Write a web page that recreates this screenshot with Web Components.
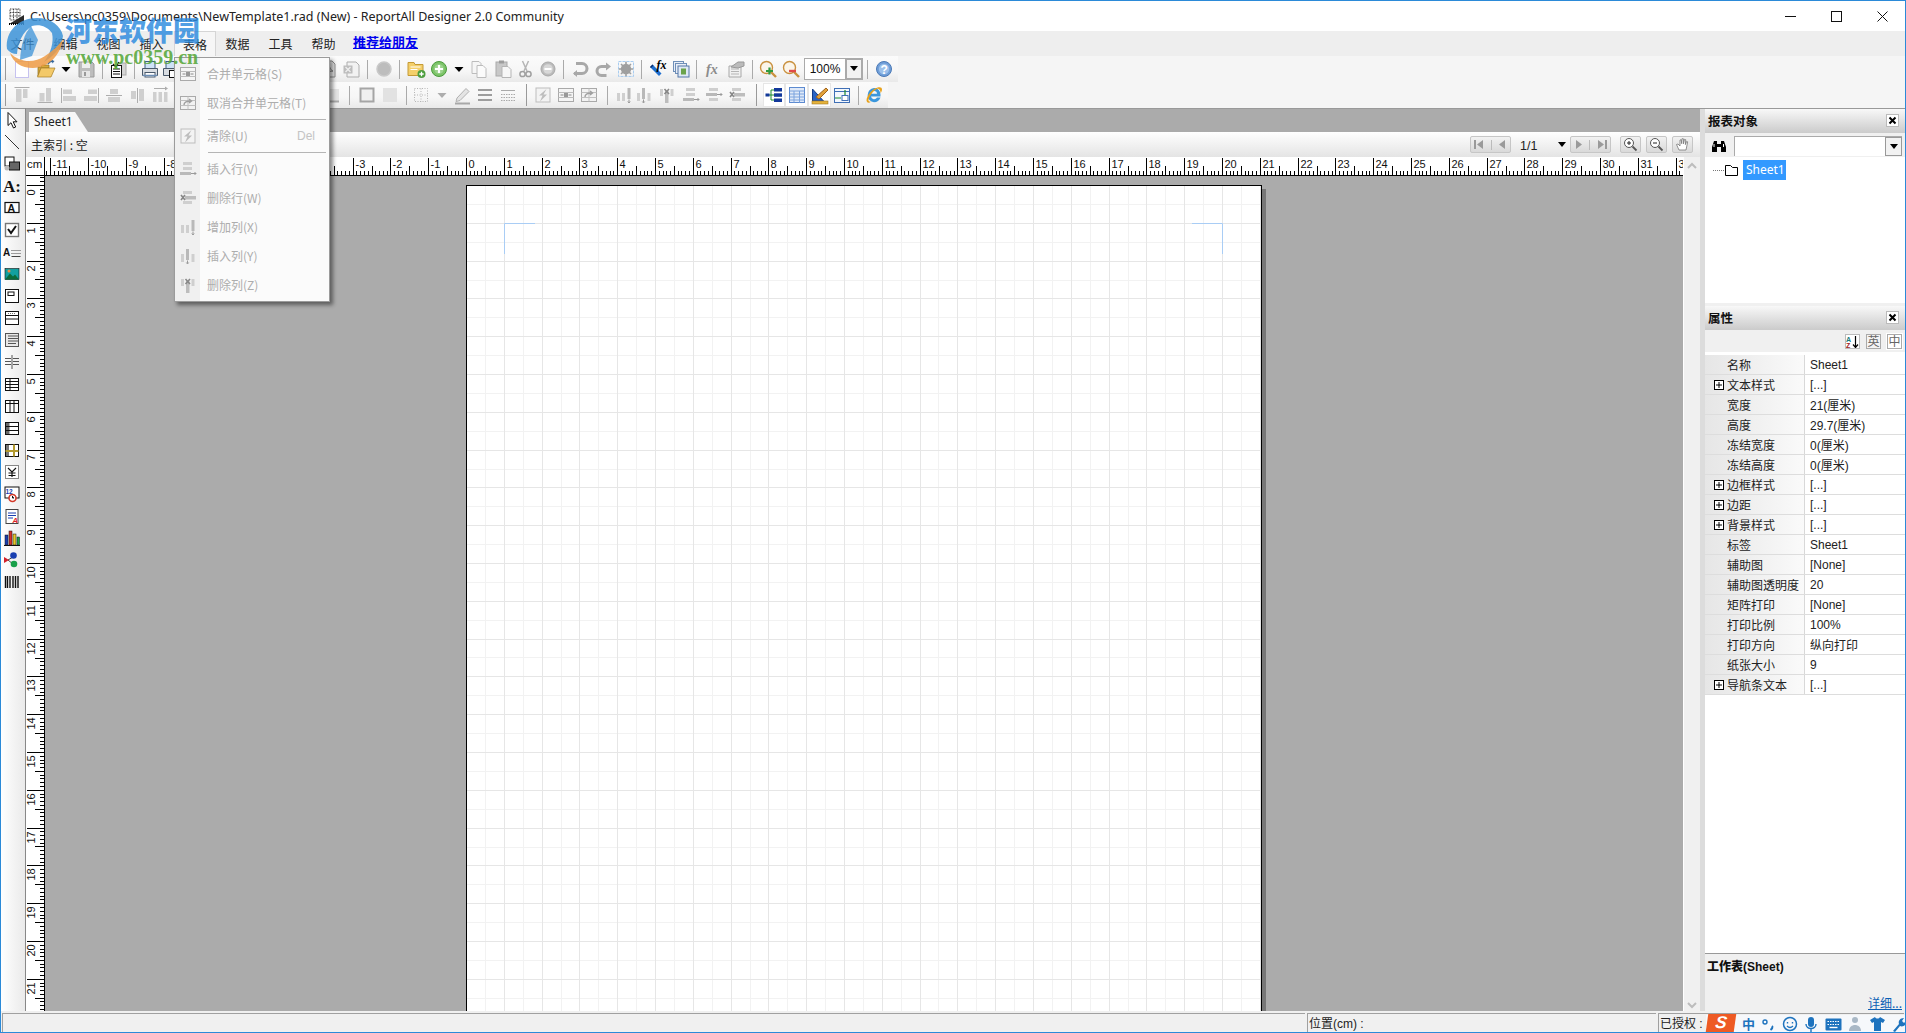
<!DOCTYPE html>
<html lang="zh"><head><meta charset="utf-8"><title>ReportAll Designer</title>
<style>
html,body{margin:0;padding:0;background:#f0f0f0;overflow:hidden}
body{font:12px "Liberation Sans","Noto Sans CJK SC",sans-serif;color:#111}
</style></head><body>
<ra-app>
  <ra-titlebar slot="title">C:\Users\pc0359\Documents\NewTemplate1.rad (New) - ReportAll Designer 2.0 Community</ra-titlebar>
  <ra-menubar slot="menu"></ra-menubar>
  <ra-toolbar slot="tb1" items="grip:9 new:24 open:23.5 drop:17.5 save:22 sep:10 preview:22 sep:10 print:22 pprint:20 gap:136 pdf:23 excel:23 sep:9 circle:23 sep:9 folder:23 plus:24 drop:15 copy:25 paste:23 cut:23 minus:22 sep:9 undo:23 redo:23 gear:23 sep:9 fxedit:23 layers:23 sep:9 fx:23 hand:23 sep:10 zin:22 zout:23 gap:1.5 combo:59 sep:10 help:22 gap:3"></ra-toolbar>
  <ra-toolbar slot="tb2" items="grip:9 atop:23 abot:23 aleft:23 aright:23 acv:23 ach:23 dist:23 gap:149.5 rectb:23 sep:12 box:23 boxf:23 sep:9 dots:21 dropg:20 pen:21 lines:24 dash:23 grip:14 bolt:19.5 merge:25 unmerge:22 sep:14 addcol:19 inscol:22 delcol:24 insrow:24 delrow:22 xrow:24 grip:14 tree!:22 table!:23 tool!:23 layout:22 sep:10 ie:22 gap:3"></ra-toolbar>
  <ra-rail slot="rail"></ra-rail>
  <ra-center slot="center"></ra-center>
  <ra-dock slot="dock"></ra-dock>
  <ra-status slot="status"></ra-status>
  <ra-dropdown slot="over"></ra-dropdown>
  <ra-watermark slot="over"></ra-watermark>
  <ra-ime slot="over"></ra-ime>
</ra-app>
<script>
const g1='#cfcfcf',g2='#adadad',g3='#8e8e8e';
const T=(x,y,s,t,extra='')=>`<text x="${x}" y="${y}" font-size="${s}" ${extra}>${t}</text>`;
const ICONS={
 new:`<rect x="3.5" y="2.5" width="13" height="16" fill="#fff" stroke="#c6c2ef"/>`,
 open:`<path d="M2 8h3l1-2h7v3H5L2 17z" fill="#d8a93a" stroke="#8a6a1e" stroke-width=".7"/><path d="M5 9h14l-4 9H1.500z" fill="#f3c969" stroke="#a67c23" stroke-width=".7"/><path d="M12 5c1-2 3-3 5-3" fill="none" stroke="#35689c" stroke-width="1.300"/><path d="M15.500 1l3 1-2 2.500z" fill="#35689c"/>`,
 drop:`<path d="M5.500 8h9l-4.500 5z" fill="#000"/>`,
 dropg:`<path d="M5.500 8h9l-4.500 5z" fill="${g2}"/>`,
 save:`<path d="M3 3h13l2 2v13H3z" fill="#bdbdbd" stroke="#9a9a9a"/><rect x="6" y="3.500" width="8" height="5.500" fill="#eee"/><rect x="6" y="12" width="8" height="6" fill="#e6e6e6"/><rect x="8" y="13" width="2" height="4" fill="#999"/>`,
 preview:`<rect x="9" y="4" width="9" height="12" fill="#d4d4d4" stroke="#aaa"/><rect x="3.500" y="6.500" width="10" height="12" fill="#fff" stroke="#111"/><path d="M5 10h7M5 12.500h7M5 15h7" stroke="#111"/><path d="M5 5l3 3 3-5" fill="none" stroke="#111" stroke-width="1.200"/>`,
 print:`<rect x="5" y="2.500" width="10" height="8" fill="#cfe3f7" stroke="#3e5f86"/><path d="M2.500 9.500h15v7h-15z" fill="#d9dde2" stroke="#4a5a6c"/><rect x="5" y="13.500" width="10" height="4.500" fill="#fff" stroke="#4a5a6c"/><path d="M3 16.500h14" stroke="#6d8fb5" stroke-width="1.500"/>`,
 pprint:`<rect x="5" y="2.500" width="10" height="8" fill="#cfe3f7" stroke="#3e5f86"/><path d="M2.500 9.500h15v7h-15z" fill="#d9dde2" stroke="#4a5a6c"/><rect x="8.500" y="11.500" width="9" height="7" fill="#fff" stroke="#111"/>`,
 pdf:`<path d="M4 2h9l3 3v13H4z" fill="#e9e9e9" stroke="${g3}"/><path d="M6 14c3-2 4-6 4-8 1 4 3 6 4 6-3 0-5 1-8 2z" fill="none" stroke="#777"/>`,
 excel:`<path d="M5 3h9l3 3v12H5z" fill="#f2f2f2" stroke="${g2}"/><path d="M1.500 6.500h9v8h-9z" fill="#bdbdbd"/><path d="M3.500 8l5 5M8.500 8l-5 5" stroke="#eee" stroke-width="1.300"/>`,
 circle:`<circle cx="10" cy="10" r="7" fill="#bdbdbd" stroke="#c9c9c9" stroke-width="1.500"/>`,
 folder:`<path d="M2 3.500h6l1 2h8v11H2z" fill="#f4cf6a" stroke="#c49a36"/><path d="M4.500 8h10M4.500 10.500h7" stroke="#fff"/><circle cx="15.500" cy="15" r="4" fill="#4d9e3f"/><path d="M15.500 12.800v4.400M13.300 15h4.400" stroke="#fff" stroke-width="1.300"/>`,
 plus:`<circle cx="10" cy="10" r="7.500" fill="#7cc468" stroke="#4b9b3c"/><circle cx="10" cy="10" r="4.800" fill="#fff" fill-opacity=".25"/><path d="M10 6v8M6 10h8" stroke="#fff" stroke-width="2.200"/>`,
 copy:`<path d="M3 2.500h7l2 2v10H3z" fill="#f6f6f6" stroke="#bcbcbc"/><path d="M8 6.500h6l3 3v9H8z" fill="#fbfbfb" stroke="#bcbcbc"/>`,
 paste:`<rect x="3" y="3" width="11" height="14" fill="#c8c8c8" stroke="#aaa"/><rect x="6" y="1.500" width="5" height="3" fill="#9d9d9d"/><path d="M9 7.500h6l3 3v8H9z" fill="#f7f7f7" stroke="#b5b5b5"/>`,
 cut:`<path d="M12.500 2L8 12M6.500 2L11 12" stroke="#b5b5b5" stroke-width="1.500"/><circle cx="6.500" cy="15" r="2.600" fill="none" stroke="#9f9f9f" stroke-width="1.500"/><circle cx="12.500" cy="15" r="2.600" fill="none" stroke="#9f9f9f" stroke-width="1.500"/>`,
 minus:`<circle cx="10" cy="10" r="7" fill="#bcbcbc" stroke="#a8a8a8"/><circle cx="10" cy="10" r="4.800" fill="#d8d8d8"/><path d="M6.500 10h7" stroke="#fff" stroke-width="2"/>`,
 undo:`<path d="M6 4.500h6a4.500 4.500 0 0 1 0 10H4" fill="none" stroke="#a8a8a8" stroke-width="3"/><path d="M7 11l-4 3.500 4 3.500z" fill="#a8a8a8"/>`,
 redo:`<path d="M14 7.500H8.500a4 4 0 0 0 0 9h5" fill="none" stroke="#a8a8a8" stroke-width="3"/><path d="M13 3.500l5 4-5 4z" fill="#a8a8a8"/>`,
 gear:`<rect x="2.500" y="2.500" width="15" height="15" fill="none" stroke="#a9cdf0" stroke-dasharray="3 1"/><circle cx="10" cy="10" r="5.200" fill="#9f9f9f"/><circle cx="10" cy="10" r="2" fill="#eee"/><path d="M10 2.800v14.400M2.800 10h14.400M5 5l10 10M15 5L5 15" stroke="#9f9f9f" stroke-width="1.600"/>`,
 fxedit:`<path d="M2 8l9 9 2.500-2.500-9-9z" fill="#1f6fd0"/><path d="M2 8l2.500-2.500 1 1L3 9z" fill="#0d2f6b"/>`+T(8.500,10,12,'fx','font-family="Liberation Serif" font-style="italic" font-weight="bold" fill="#000"'),
 layers:`<rect x="2.500" y="2.500" width="10" height="10" fill="#e8eef7" stroke="#6f8fb8"/><rect x="4.500" y="4.500" width="11" height="10" fill="#e8eef7" stroke="#6f8fb8"/><rect x="7" y="7" width="11" height="11" fill="#dfe9f5" stroke="#5577a8"/><rect x="10" y="9.500" width="5" height="6" fill="#6ba34b"/>`,
 fx:T(3,15,14,'fx','font-family="Liberation Serif" font-style="italic" font-weight="bold" fill="#8c8c8c"'),
 hand:`<path d="M3 7h12v11H3z" fill="#f1f1f1" stroke="#a8a8a8"/><path d="M5 10h8M5 12.500h8M5 15h8" stroke="#b5b5b5"/><path d="M5 8l7-5h6v4l-6 2z" fill="#bbb" stroke="#999"/>`,
 zin:`<circle cx="8.500" cy="8.500" r="6" fill="#fbf5ea" stroke="#c9913f" stroke-width="1.400"/><path d="M13 13l5 5" stroke="#c9913f" stroke-width="2.400"/><path d="M11.500 8.500v7M8 12h7" stroke="#2f9a3f" stroke-width="2.200"/>`,
 zout:`<circle cx="8.500" cy="8.500" r="6" fill="#fbf5ea" stroke="#c9913f" stroke-width="1.400"/><path d="M13 13l5 5" stroke="#c9913f" stroke-width="2.400"/><path d="M8 12h7" stroke="#e04a4a" stroke-width="2.400"/>`,
 help:`<circle cx="10" cy="10" r="7.500" fill="#6f9ed8" stroke="#4b79b6"/><circle cx="10" cy="10" r="5.200" fill="#9cc0ea"/>`+T(6.500,14.500,12,'?','font-family="Liberation Sans" font-weight="bold" fill="#fff"'),
 atop:`<path d="M2.500 2.500h15" stroke="${g2}"/><rect x="4" y="4" width="5.500" height="13" fill="${g1}"/><rect x="11" y="4" width="4.500" height="9" fill="${g1}"/>`,
 abot:`<path d="M2.500 17.500h15" stroke="${g2}"/><rect x="4.500" y="8" width="5" height="8.500" fill="${g1}"/><rect x="11" y="3" width="5" height="13.500" fill="${g1}"/>`,
 aleft:`<path d="M3.500 3v15" stroke="${g2}"/><rect x="5" y="4.500" width="9" height="4.500" fill="${g1}"/><rect x="5" y="11" width="13" height="5" fill="${g1}"/>`,
 aright:`<path d="M17.500 3v15" stroke="${g2}"/><rect x="7" y="4.500" width="9" height="4.500" fill="${g1}"/><rect x="3" y="11" width="13" height="5" fill="${g1}"/>`,
 acv:`<path d="M2 10.500h16" stroke="${g2}"/><rect x="6" y="4" width="8" height="5" fill="${g1}"/><rect x="4" y="12" width="12" height="5" fill="${g1}"/>`,
 ach:`<path d="M10.500 3v15" stroke="${g2}"/><rect x="4" y="6" width="5" height="8" fill="${g1}"/><rect x="12" y="4" width="5" height="12" fill="${g1}"/>`,
 dist:`<path d="M4 3.500h11" stroke="${g2}"/><path d="M15 1.500l3 2-3 2z" fill="${g2}"/><rect x="3" y="7" width="3.500" height="10" fill="${g1}"/><rect x="8.500" y="7" width="3.500" height="10" fill="${g1}"/><rect x="14" y="7" width="3.500" height="10" fill="${g1}"/>`,
 rectb:`<rect x="3" y="4" width="14" height="12" fill="#e3e3e3"/><path d="M3 16.500h14" stroke="#aaa" stroke-width="2"/>`,
 box:`<rect x="3.500" y="3.500" width="13" height="13" fill="#f0f0f0" stroke="#a5a5a5" stroke-width="2"/>`,
 boxf:`<rect x="3" y="3" width="14" height="14" fill="#e2e2e2"/>`,
 dots:`<path d="M3.500 3.500h13v13h-13zM3.500 10h13M10 3.500v13" fill="none" stroke="#b5b5b5" stroke-dasharray="1 1.500"/>`,
 pen:`<path d="M5 13L14 3.500l3 3L8 15.500l-4 1z" fill="#e4e4e4" stroke="#b0b0b0"/><path d="M3 18.500h15" stroke="#a8a8a8" stroke-width="2"/>`,
 lines:`<path d="M3 5h14M3 10h14M3 15h14" stroke="#9d9d9d" stroke-width="2"/>`,
 dash:`<path d="M3 5.500h14" stroke="#aaa"/><path d="M3 9.500h14M3 12.500h14M3 15.500h14" stroke="#aaa" stroke-dasharray="1.500 1"/>`,
 bolt:`<rect x="3" y="3" width="14" height="14" fill="#f3f3f3" stroke="#bdbdbd"/><path d="M13.500 4L6 10.500h3.500L7 16.500l7-7h-3.500z" fill="#bdbdbd"/>`,
 merge:`<rect x="2.500" y="3.500" width="15" height="13" fill="#f5f5f5" stroke="#a9a9a9"/><path d="M2.500 7.500h15M2.500 12.500h15" stroke="#bcbcbc"/><path d="M4.500 10h3M12.500 10h3" stroke="#888"/><rect x="8" y="8" width="4" height="4" fill="#999"/>`,
 unmerge:`<rect x="2.500" y="3.500" width="15" height="13" fill="#f2f2f2" stroke="#a9a9a9"/><path d="M2.500 7.500h15M2.500 12.500h15M10 3.500v13" stroke="#c0c0c0"/><path d="M6 12c0-3 3-4 7-4M11 6l2.500 2-2.500 2" fill="none" stroke="#9f9f9f" stroke-width="1.400"/>`,
 addcol:`<rect x="3" y="8" width="3" height="8" fill="${g1}"/><rect x="8" y="8" width="3" height="8" fill="${g1}"/><rect x="13.500" y="3" width="3" height="11" fill="#b9b9b9"/><path d="M15 14.500v3M13.800 16.500l1.200 1.500 1.200-1.500" stroke="#999" fill="none"/>`,
 inscol:`<rect x="3" y="8" width="3" height="8" fill="${g1}"/><rect x="8" y="3" width="3" height="11" fill="#b9b9b9"/><rect x="13.500" y="8" width="3" height="8" fill="${g1}"/><path d="M9.500 14.500v3M8.300 16.500l1.200 1.500 1.200-1.500" stroke="#999" fill="none"/>`,
 delcol:`<rect x="3" y="4" width="3" height="7" fill="${g1}"/><rect x="8" y="6" width="3.500" height="12" fill="#bdbdbd"/><rect x="13.500" y="4" width="3" height="7" fill="${g1}"/><path d="M7.500 4l4.500 5M12 4L7.500 9" stroke="#888" stroke-width="1.600"/>`,
 insrow:`<rect x="5" y="3" width="9" height="3" fill="${g1}"/><rect x="5" y="8" width="9" height="3" fill="${g1}"/><rect x="2" y="13" width="11" height="3" fill="#b9b9b9"/><path d="M13 14.500h5M16.500 13l1.500 1.500-1.500 1.500" stroke="#999" fill="none"/>`,
 delrow:`<rect x="5" y="3" width="9" height="3" fill="${g1}"/><rect x="2" y="8" width="11" height="3" fill="#b9b9b9"/><rect x="5" y="13" width="9" height="3" fill="${g1}"/><path d="M13 9.500h5M16.500 8l1.500 1.500-1.500 1.500" stroke="#999" fill="none"/>`,
 xrow:`<rect x="5" y="3" width="9" height="3" fill="${g1}"/><rect x="7" y="8" width="11" height="3.500" fill="#bdbdbd"/><rect x="5" y="13" width="9" height="3" fill="${g1}"/><path d="M3 7l4 5M7 7l-4 5" stroke="#888" stroke-width="1.600"/>`,
 tree:`<path d="M4 10h3M7 5v10M7 5h3M7 15h3M7 10h3" stroke="#1a8a2e" fill="none"/><rect x="1.500" y="8.500" width="4" height="3" fill="#12389a"/><rect x="10" y="3" width="8" height="3.500" fill="#12389a"/><rect x="10" y="8.300" width="8" height="3.500" fill="#12389a"/><rect x="10" y="13.500" width="8" height="3.500" fill="#12389a"/>`,
 table:`<rect x="2.500" y="2.500" width="15" height="15" fill="#dfe9f8" stroke="#5c8ad0"/><path d="M2.500 6h15M2.500 9h15M2.500 12h15M2.500 15h15M7 6v11.500M12.500 6v11.500" stroke="#7da4de"/>`,
 tool:`<path d="M2.500 16V4l11 12z" fill="#2a63c4" stroke="#123c8a"/><path d="M6 12l10-9 2 2-9 9z" fill="#e2a23b" stroke="#a0641c"/><rect x="2" y="16" width="16" height="3" fill="#e6b33c" stroke="#a0781e" stroke-width=".6"/>`,
 layout:`<rect x="2.500" y="3.500" width="15" height="14" fill="#f3f7fd" stroke="#3f6fb5"/><path d="M2.500 6.500h15" stroke="#3f6fb5"/><rect x="10" y="10.500" width="6" height="5" fill="#fff" stroke="#3f6fb5"/><path d="M3 13h6M13 10V5" stroke="#1a8a2e" stroke-width="1.200"/>`,
 ie:`<path d="M16.500 11.500H7a3.200 3.200 0 0 0 6 1h3.500c-1 3-3.500 4.800-6.500 4.800A7.200 7.200 0 0 1 10 3c4 0 7 3 6.500 8.500zM7.200 8.800h5.800a2.900 2.900 0 0 0-5.800 0z" fill="#3b97dc"/><path d="M3 17C1 14 6 5 13 2.800c3-1 5-.5 5 1.700 0 1-.5 2.400-1.500 3.500 0-2-.5-4-2.800-4.500C8 6 4.500 13 4.500 15.500c0 1 1 1.500 2.800 1-1.800 1.500-3.300 1.500-4.300.5z" fill="#e8a21c"/>`,
 r_arrow:`<path d="M6 2.500v13l3-2.800 2.500 5.300 2.200-1-2.500-5.200H15z" fill="#fff" stroke="#111"/>`,
 r_line:`<path d="M3 3l14 14" stroke="#333"/>`,
 r_shape:`<rect x="3" y="3" width="9" height="9" fill="#fff" stroke="#111"/><rect x="7.500" y="8" width="10" height="8" fill="#666" stroke="#111"/><circle cx="5" cy="14" r="2.500" fill="#bbb"/>`,
 r_a:T(1,16,17,'A:','font-family="Liberation Serif" font-weight="bold" fill="#111"'),
 r_tbox:`<rect x="3" y="4.500" width="14" height="10" fill="#fff" stroke="#111" stroke-width="1.200"/>`+T(5.500,13.500,10.500,'A','font-family="Liberation Sans" font-weight="bold" fill="#111"'),
 r_check:`<rect x="3.500" y="3.500" width="13" height="13" fill="#fff" stroke="#777" stroke-width="1.400"/><path d="M6 9l3 4 5-7" fill="none" stroke="#111" stroke-width="2"/>`,
 r_dots:T(1,14,10,'A','font-family="Liberation Sans" font-weight="bold" fill="#111"')+`<path d="M9.500 8.500h9M9.500 11.500h9" stroke="#444" stroke-dasharray="1 1"/><path d="M9.500 14.500h9" stroke="#444"/>`,
 r_img:`<rect x="3" y="4.500" width="14" height="11" fill="#12a0a0" stroke="#111" stroke-width=".6"/><path d="M3 15.500l5-6 3 3 2-2 4 5z" fill="#0b6b3a"/><circle cx="7" cy="7" r="1.500" fill="#e84"/>`,
 r_frame:`<rect x="3.500" y="3.500" width="13" height="13" fill="#fff" stroke="#111"/><rect x="6" y="6" width="6" height="3.500" fill="#fff" stroke="#111"/>`,
 r_head:`<rect x="3.500" y="3.500" width="13" height="13" fill="#fff" stroke="#111"/><path d="M3.500 7.500h13M3.500 11h13" stroke="#111"/><path d="M6 5.500h8" stroke="#777" stroke-dasharray="1 1"/>`,
 r_list:`<rect x="3.500" y="3.500" width="13" height="13" fill="#e8e8e8" stroke="#555"/><path d="M6 6h10.500M6 8.500h10.500M6 11h10.500M6 13.500h8" stroke="#555"/>`,
 r_split:`<path d="M3 6.500h6M11 6.500h6M3 9.500h6M11 9.500h6M3 12.500h6M11 12.500h6M10 3v14" stroke="#555"/>`,
 r_grid:`<rect x="3.500" y="4.500" width="13" height="12" fill="#fff" stroke="#111"/><path d="M3.500 7.500h13M3.500 10.500h13M3.500 13.500h13M8 4.500v12" stroke="#111"/>`,
 r_cols:`<rect x="3.500" y="4.500" width="13" height="12" fill="#fff" stroke="#111"/><path d="M3.500 7.500h13M8 4.500v12M12 4.500v12" stroke="#111"/>`,
 r_rows:`<rect x="3.500" y="4.500" width="13" height="12" fill="#fff" stroke="#111"/><rect x="4" y="5" width="3.500" height="11" fill="#666"/><path d="M3.500 8.500h13M3.500 12.500h13" stroke="#111"/>`,
 r_cross:`<rect x="3.500" y="4.500" width="13" height="12" fill="#fff" stroke="#111"/><rect x="4" y="5" width="3" height="11" fill="#777"/><path d="M3.500 11h13M12 4.500v12" stroke="#b39a2f" stroke-width="2"/>`,
 r_yen:`<rect x="3.500" y="3.500" width="13" height="13" fill="#fff" stroke="#888"/><path d="M6 6l4 4 4-4M10 10v5M6.500 11h7M6.500 13.500h7" fill="none" stroke="#111" stroke-width="1.200"/>`,
 r_num:`<rect x="3" y="3" width="14" height="11" fill="#fff" stroke="#111"/>`+T(3.500,9.500,6.500,'12','font-family="Liberation Sans" font-weight="bold" fill="#1a3fb0"')+`<circle cx="10.500" cy="14" r="3.500" fill="#fff" stroke="#d23a2a" stroke-width="1.600"/><path d="M10.500 12v2h1.500" stroke="#111"/>`,
 r_note:`<rect x="4" y="3.500" width="12" height="14" fill="#fff" stroke="#444"/><path d="M4 3.500h12" stroke="#444" stroke-dasharray="1 1"/><path d="M6 7h8M6 9.500h8M6 12h5" stroke="#1a3fb0"/>`+T(10.500,17,7.500,'A','font-family="Liberation Sans" font-weight="bold" font-style="italic" fill="#d22"'),
 r_chart:`<path d="M2 17.500h16" stroke="#111"/><rect x="3" y="7" width="3" height="10" fill="#1a3fb0" stroke="#111" stroke-width=".5"/><rect x="7" y="3" width="3" height="14" fill="#d2302a" stroke="#111" stroke-width=".5"/><rect x="11" y="6" width="3" height="11" fill="#e6c82a" stroke="#111" stroke-width=".5"/><rect x="15" y="9" width="2.500" height="8" fill="#19a04a" stroke="#111" stroke-width=".5"/>`,
 r_pie:`<path d="M6 10l5-3M6 10l5 4" stroke="#444"/><circle cx="11.500" cy="5.500" r="3.300" fill="#1a3fb0"/><path d="M2 7l5 3-5 3z" fill="#d2202a"/><circle cx="12" cy="14" r="3.300" fill="#19a04a"/>`,
 r_bar:`<path d="M3.500 4v12M5.500 4v12M8 4v12M11 4v12M13.500 4v12M16 4v12" stroke="#111" stroke-width="1.400"/>`
};
class Base extends HTMLElement{
  constructor(){super();this.attachShadow({mode:'open'});}
  connectedCallback(){this.shadowRoot.innerHTML=`<style>${this.css()}</style>${this.html()}`;}
  css(){return ':host{display:block}';} html(){return '<slot></slot>';}
}
const def=(n,c)=>customElements.define(n,c);
const CJK='"Noto Sans CJK SC","Liberation Sans",sans-serif';
const MIX='"Liberation Sans","Noto Sans CJK SC",sans-serif';

def('ra-icon',class extends Base{
  css(){return `:host{display:inline-flex;width:20px;height:20px;flex:none}svg{overflow:visible;display:block}`;}
  html(){return `<svg width="20" height="20" viewBox="0 0 20 20">${ICONS[this.getAttribute('name')]||''}</svg>`;}
});

def('ra-app',class extends Base{
  css(){return `:host{display:grid;box-sizing:border-box;width:1906px;height:1033px;border:1px solid #2b8ad8;position:relative;overflow:hidden;background:#f0f0f0;
    grid-template-columns:25px 1fr 5px 200px;grid-template-rows:30px 25px 26px 26px 1fr 21px;}
    .row{grid-column:1/-1;min-width:0}
    .rail{grid-column:1;min-height:0}.center{grid-column:2;min-width:0;min-height:0}.gap{grid-column:3;background:#dcdcdc;border-top:1px solid #999}.dock{grid-column:4;min-height:0}`;}
  html(){return `<div class="row"><slot name="title"></slot></div><div class="row" style="background:#eee"><slot name="menu"></slot></div>
   <div class="row" style="background:#f5f5f5"><slot name="tb1"></slot></div><div class="row" style="background:#f5f5f5"><slot name="tb2"></slot></div>
   <div class="rail"><slot name="rail"></slot></div><div class="center"><slot name="center"></slot></div><div class="gap"></div><div class="dock"><slot name="dock"></slot></div>
   <div class="row"><slot name="status"></slot></div><slot name="over"></slot>`;}
});

def('ra-titlebar',class extends Base{
  css(){return `:host{display:flex;align-items:center;height:30px;background:#fff;font:12.500px "Noto Sans","Noto Sans CJK SC",sans-serif;color:#222}
   .ic{margin:0 4px 0 7px;width:18px;height:18px}.t{flex:1;white-space:nowrap}
   .w{display:flex}.b{width:46px;height:30px;display:flex;align-items:center;justify-content:center}`;}
  html(){return `<svg class="ic" viewBox="0 0 18 18"><path d="M2 2h10v11H2zM2 5.500h10M2 9h10M5.500 2v11M9 2v11" fill="#fff" stroke="#444" stroke-dasharray="1 .6"/><path d="M1 17h15L16 8z" fill="#2a2a2a"/><path d="M1 17h15" stroke="#000" stroke-width="2" stroke-dasharray="1 1"/></svg>
   <div class="t"><slot></slot></div><div class="w">
   <div class="b"><svg width="11" height="11"><path d="M0 5.500h11" stroke="#111"/></svg></div>
   <div class="b"><svg width="11" height="11"><rect x=".5" y=".5" width="10" height="10" fill="none" stroke="#111"/></svg></div>
   <div class="b"><svg width="11" height="11"><path d="M.5.500l10 10M10.500.500l-10 10" stroke="#111"/></svg></div></div>`;}
});

def('ra-menubar',class extends Base{
  css(){return `:host{display:flex;height:25px;background:#eee;font:12px ${CJK};color:#222}
   span{display:flex;align-items:center;justify-content:center;width:43px;box-sizing:border-box;white-space:nowrap}
   .on{background:#f6f6f6;border:1px solid #d5d5d5;border-bottom:none;width:42px;margin-right:1px;margin-left:1px}
   .d{margin-left:-1px}
   a{font:bold 13px ${CJK};color:#0000ee;text-decoration:underline;margin-left:8px;line-height:22px;white-space:nowrap}`;}
  html(){return `<span>文件</span><span>编辑</span><span>视图</span><span>插入</span><span class="on">表格</span><span class="d">数据</span><span>工具</span><span>帮助</span><a>推荐给朋友</a>`;}
});

def('ra-toolbar',class extends Base{
  css(){return `:host{display:block;height:26px}
   .bar{display:inline-flex;height:26px;align-items:center;background:linear-gradient(#fbfbfb,#f6f6f6 60%,#e9e9e9)}
   .c{display:flex;align-items:center;justify-content:center;height:24px;flex:none;overflow:visible}
   .c i{display:block;width:1px;height:19px;background:#aaa}
   .g i{height:22px;background:#999;box-shadow:2px 10.500px 0 -10px #999}
   .on{background:#fff;box-shadow:inset 0 0 0 1px #e6e6e6}
   .combo{box-sizing:border-box;height:22px;border:1px solid #aaa;background:#fff;display:flex;font:12px "Liberation Sans",sans-serif}
   .combo b{flex:1;font-weight:normal;text-align:center;line-height:20px}
   .combo u{width:18px;box-sizing:border-box;border:2px solid #aaa;margin:-1px;display:flex;align-items:center;justify-content:center;background:#f2f2f2}`;}
  html(){
   const o=(this.getAttribute('items')||'').split(' ').map(s=>{let [n,w]=s.split(':');const on=n.endsWith('!');n=n.replace('!','');
     if(n==='gap')return `<div style="width:${w}px;flex:none"></div>`;
     if(n==='sep')return `<div class="c" style="width:${w}px"><i></i></div>`;
     if(n==='grip')return `<div class="c g" style="width:${w}px"><i></i></div>`;
     if(n==='combo')return `<div class="combo" style="width:${w}px"><b>100%</b><u><svg width="10" height="6"><path d="M1 0h8L5 5z" fill="#000"/></svg></u></div>`;
     return `<div class="c${on?' on':''}" style="width:${w}px"><ra-icon name="${n}"></ra-icon></div>`;}).join('');
   return `<div class="bar">${o}</div>`;}
});

def('ra-rail',class extends Base{
  css(){return `:host{display:flex;flex-direction:column;height:100%;box-sizing:border-box;align-items:center;padding-right:2px;border-top:1px solid #999;border-right:1px solid #888;background:linear-gradient(90deg,#fff,#f2f2f2 60%,#eaeaea);overflow:hidden}
   div{height:22px;display:flex;align-items:center;justify-content:center;flex:none;width:22px}`;}
  html(){return ['arrow','line','shape','a','tbox','check','dots','img','frame','head','list','split','grid','cols','rows','cross','yen','num','note','chart','pie','bar'].map(n=>`<div><ra-icon name="r_${n}"></ra-icon></div>`).join('');}
});

def('ra-tab',class extends Base{
  css(){return `:host{display:flex;height:24px;box-sizing:border-box;background:#ababab;border-top:1px solid #999;padding:3px 0 0 3px}
   div{width:59px;height:20px;background:#f7f7f7;clip-path:polygon(0 0,78% 0,100% 100%,0 100%);font:12px "Noto Sans",sans-serif;color:#222;padding-left:5px;box-sizing:border-box;line-height:19px}`;}
  html(){return `<div><slot></slot></div>`;}
});

def('ra-navbar',class extends Base{
  css(){return `:host{display:flex;align-items:center;height:25px;background:linear-gradient(#fff,#f4f4f4 40%,#e4e4e4);font:12px ${CJK};color:#222;padding-left:5px;box-sizing:border-box}
   .k{flex:1;white-space:pre}
   .grp{display:flex;box-sizing:border-box;height:17px;border:1px solid #c6c6c6;border-radius:2px;background:linear-gradient(#f2f2f2,#d9d9d9);align-items:center;justify-content:space-around}
   .p{font:12.500px "Liberation Sans",sans-serif;width:41px;padding-left:9px;box-sizing:border-box;margin-top:2px}
   .dr{width:18px;display:flex;padding-left:5px;box-sizing:border-box}
   .z{width:21px;margin-left:5px}.z svg{display:block}`;}
  html(){const g='#9a9a9a';
   const mag=(c)=>`<svg width="15" height="15" viewBox="0 0 15 15"><circle cx="6" cy="6" r="4.500" fill="#fff" stroke="#555"/><path d="M9.500 9.500l4 4" stroke="#555" stroke-width="1.800"/><path d="${c}" stroke="#222"/></svg>`;
   return `<span class="k"><slot></slot></span>
    <div class="grp" style="width:41px"><svg width="11" height="11"><path d="M1 1v9" stroke="${g}" stroke-width="2"/><path d="M9 1v9L3 5.500z" fill="${g}"/></svg><span style="width:1px;height:10px;background:#bbb"></span><svg width="9" height="11"><path d="M7 1v9L1 5.500z" fill="${g}"/></svg></div>
    <span class="p">1/1</span><div class="dr"><svg width="10" height="6"><path d="M1 0h8L5 5z" fill="#000"/></svg></div>
    <div class="grp" style="width:41px"><svg width="9" height="11"><path d="M2 1v9l6-4.500z" fill="${g}"/></svg><span style="width:1px;height:10px;background:#bbb"></span><svg width="11" height="11"><path d="M2 1v9l6-4.500z" fill="${g}"/><path d="M10 1v9" stroke="${g}" stroke-width="2"/></svg></div>
    <div class="grp z" style="margin-left:9px">${mag('M4 6h4M6 4v4')}</div><div class="grp z">${mag('M4 6h4')}</div>
    <div class="grp z"><svg width="15" height="15" viewBox="0 0 15 15"><path d="M4 13L1.500 7.500 3 7l2 2V3l1.200-.3.500 4 .3-5 1.400.100.100 5 1-4.500 1.200.3-.3 5 1.300-3.300 1 .5L11 13z" fill="#fff" stroke="#777" stroke-width=".8"/></svg></div>
    <div style="width:7px"></div>`;}
});

def('ra-hruler',class extends Base{
  css(){return `:host{display:block;height:19px;background:#fff;overflow:hidden}svg{display:block}
   text{font:11px "Liberation Sans",sans-serif;fill:#111}`;}
  html(){const W=1638,O=421,C=37.8;let d='',t='';
    for(let i=-120;i<340;i++){const x=Math.round(O+i*C/10)+.5;if(x<0||x>W)continue;
      const m=((i%10)+10)%10;const h=m===0?17:m===5?9:4;d+=`M${x} 18v-${h}`;
      if(m===0)t+=`<text x="${x+2}" y="11">${i/10}</text>`;}
    return `<svg width="${W}" height="19"><path d="${d}M0 18.500h${W}" stroke="#000" fill="none"/>${t}</svg>`;}
});
def('ra-vruler',class extends Base{
  css(){return `:host{display:block;height:100%;background:#fff;overflow:hidden}svg{display:block}
   text{font:11px "Liberation Sans",sans-serif;fill:#111}`;}
  html(){const H=840,O=9,C=37.8,W=19;let d='',t='';
    for(let i=-5;i<225;i++){const y=Math.round(O+i*C/10)+.5;if(y<0||y>H)continue;
      const m=((i%10)+10)%10;const h=m===0?17:m===5?9:4;d+=`M18 ${y}h-${h}`;
      if(m===0)t+=`<text transform="translate(9 ${y+(i>=100?15:10)}) rotate(-90)">${i/10}</text>`;}
    return `<svg width="${W}" height="${H}"><path d="${d}M18.500 0v${H}" stroke="#000" fill="none"/>${t}</svg>`;}
});
def('ra-page',class extends Base{
  css(){return `:host{display:block;flex:none;box-sizing:border-box;width:796px;height:1124px;background:#fff;border:1px solid #000;box-shadow:4px 4px 0 #777}svg{display:block}`;}
  html(){const C=18.9,W=794,H=1122;let a='',b='';
    for(let i=1;i<43;i++){const x=Math.round(i*C)-1+.5;if(i%2)b+=`M${x} 0v${H}`;else a+=`M${x} 0v${H}`;}
    for(let i=1;i<60;i++){const y=Math.round(i*C)-1+.5;if(i%2)b+=`M0 ${y}h${W}`;else a+=`M0 ${y}h${W}`;}
    return `<svg width="${W}" height="${H}"><path d="${b}" stroke="#f2f2f2"/><path d="${a}" stroke="#e6e6e6"/>
      <path d="M37.500 68V37.500H68M725 37.500h30.500V68" fill="none" stroke="#a9cdf5"/></svg>`;}
});
def('ra-scrollbar',class extends Base{
  css(){return `:host{display:flex;flex-direction:column;justify-content:space-between;width:17px;height:100%;box-sizing:border-box;background:#f0f0f0;border-left:1px solid #fff;padding:5px 0 2px 2px}svg{display:block}`;}
  html(){const c='#bdbdbd';return `<svg width="12" height="8"><path d="M2 6l4-4 4 4" fill="none" stroke="${c}" stroke-width="2"/></svg><svg width="12" height="8"><path d="M2 2l4 4 4-4" fill="none" stroke="${c}" stroke-width="2"/></svg>`;}
});
def('ra-center',class extends Base{
  css(){return `:host{display:flex;flex-direction:column;height:100%;min-height:0}
   .body{flex:1;min-height:0;display:grid;grid-template-columns:1fr 17px}
   .view{display:grid;grid-template-columns:19px 1fr;grid-template-rows:19px 1fr;min-width:0;min-height:0;overflow:hidden}
   .cm{background:#fff;border-right:1px solid #000;border-bottom:1px solid #000;box-sizing:border-box;font:11.500px "Liberation Sans",sans-serif;padding:1px 0 0 1px}
   .canvas{background:#ababab;display:flex;align-items:flex-start;padding:9px 0 0 421px;overflow:hidden;min-height:0}`;}
  html(){return `<ra-tab>Sheet1</ra-tab><ra-navbar>主索引 : 空</ra-navbar><div class="body"><div class="view"><div class="cm">cm</div><ra-hruler></ra-hruler><ra-vruler></ra-vruler><div class="canvas"><ra-page></ra-page></div></div><ra-scrollbar></ra-scrollbar></div>`;}
});

def('ra-panelhead',class extends Base{
  css(){return `:host{display:flex;align-items:center;justify-content:space-between;height:24px;padding:0 6px 1px 3px;box-sizing:border-box;background:linear-gradient(#f8f8f8,#cbcbcb);font:bold 12.500px ${CJK};color:#111;flex:none}
   i{display:flex;width:13px;height:13px;box-sizing:border-box;background:#fff;border:1px solid #bbb;align-items:center;justify-content:center}`;}
  html(){return `<span><slot></slot></span><i><svg width="9" height="9"><path d="M1.500 1.500l6 6M7.500 1.500l-6 6" stroke="#000" stroke-width="2"/></svg></i>`;}
});
def('ra-proprow',class extends Base{
  css(){return `:host{display:grid;grid-template-columns:100px 1fr;height:20px;box-sizing:border-box;border-bottom:1px solid #ddd;font:12px ${MIX};color:#222;background:#fff}
   .l{display:flex;align-items:center;padding-left:22px;background:linear-gradient(90deg,#e6e6e6,#fafafa);border-right:1px solid #d8d8d8;white-space:nowrap;box-sizing:border-box}
   .l.p{padding-left:9px}.l svg{margin-right:3px;flex:none}
   .v{display:flex;align-items:center;padding-left:5px;white-space:nowrap}`;}
  html(){const e=this.hasAttribute('exp');return `<div class="l ${e?'p':''}">${e?'<svg width="10" height="10"><rect x=".5" y=".5" width="9" height="9" fill="#fff" stroke="#000"/><path d="M2 5h6M5 2v6" stroke="#000"/></svg>':''}${this.getAttribute('k')}</div><div class="v">${this.getAttribute('v')}</div>`;}
});
def('ra-dock',class extends Base{
  css(){return `:host{display:flex;flex-direction:column;height:100%;background:#f0f0f0;border-top:1px solid #999;box-sizing:border-box}
   .search{display:flex;align-items:center;height:24px;flex:none;background:#f0f0f0;box-sizing:border-box;padding:2px 3px 0 6px}
   .cb{margin-left:7px;flex:1;height:20px;box-sizing:border-box;border:1px solid #aaa;border-bottom:none;border-right:none;background:#fff;display:flex;justify-content:flex-end}
   .cb u{width:17px;box-sizing:border-box;border:1px solid #999;background:#f2f2f2;display:flex;align-items:center;justify-content:center}
   .tree{height:146px;background:#fff;padding-top:3px;box-sizing:border-box;display:flex;align-items:flex-start;flex:none}
   .tree .n{display:flex;align-items:center;height:20px;padding-left:8px}
   .tree b{font:12px "Noto Sans",sans-serif;background:#3399ff;color:#fff;padding:0 3px;height:20px;line-height:19px;margin-left:4px;width:43px;box-sizing:border-box}
   .sp{height:3px;flex:none;background:#f0f0f0}
   .ptool{display:flex;height:22px;flex:none;align-items:center;justify-content:flex-end;gap:6px;padding-right:3px;background:#f0f0f0;box-sizing:border-box}
   .ptool span{width:15px;height:15px;box-sizing:border-box;border:1px solid #aaa;background:#f4f4f4;font:12px ${CJK};display:flex;align-items:center;justify-content:center;color:#666;line-height:1}
   .ptool span.a{border:1px solid #bbb;background:#fff}
   .rows{flex:none;background:#fff;padding-top:3px;height:343px;box-sizing:border-box}
   .rest{flex:1;background:#fff;border-bottom:1px solid #999;min-height:0}
   .info{height:57px;flex:none;display:flex;flex-direction:column;justify-content:space-between;padding:4px 3px 0 2px;box-sizing:border-box;background:#f0f0f0;font:bold 12px ${MIX};color:#111}
   .info a{align-self:flex-end;font:12px ${CJK};color:#0b5fb5;text-decoration:underline;line-height:16px}
   .info b{line-height:18px}`;}
  html(){const rows=[['名称','Sheet1'],['文本样式','[...]',1],['宽度','21(厘米)'],['高度','29.7(厘米)'],['冻结宽度','0(厘米)'],['冻结高度','0(厘米)'],['边框样式','[...]',1],['边距','[...]',1],['背景样式','[...]',1],['标签','Sheet1'],['辅助图','[None]'],['辅助图透明度','20'],['矩阵打印','[None]'],['打印比例','100%'],['打印方向','纵向打印'],['纸张大小','9'],['导航条文本','[...]',1]];
   return `<ra-panelhead>报表对象</ra-panelhead>
   <div class="search"><svg width="16" height="14" viewBox="0 0 16 14"><path d="M1 13V8l2-6h3v11zM15 13V8l-2-6h-3v11zM6 5h4v3H6z" fill="#000"/><path d="M3 5v3M12.500 5v3" stroke="#fff"/></svg><div class="cb"><u><svg width="10" height="6"><path d="M1 0h8L5 5z" fill="#000"/></svg></u></div></div>
   <div class="tree"><div class="n"><svg width="26" height="12"><path d="M0 6.500h12" stroke="#777" stroke-dasharray="1 1"/><path d="M12.500 11.500v-10h5l2 2h5v8z" fill="#fff" stroke="#000"/></svg><b>Sheet1</b></div></div>
   <div class="sp"></div><ra-panelhead>属性</ra-panelhead>
   <div class="ptool"><span class="a"><svg width="13" height="13"><text x="0" y="6.500" font-size="7" font-family="Liberation Sans" font-weight="bold" fill="#1a7a7a">A</text><text x="0" y="13" font-size="7" font-family="Liberation Sans" font-weight="bold" fill="#a02020">Z</text><path d="M9.500 1v11M7 9.500l2.500 3 2.500-3" fill="none" stroke="#000" stroke-width="1.200"/></svg></span><span>英</span><span style="background:#fff;box-shadow:0 0 0 1px #fff">中</span></div>
   <div class="rows">${rows.map(r=>`<ra-proprow k="${r[0]}" v="${r[1]}" ${r[2]?'exp':''}></ra-proprow>`).join('')}</div>
   <div class="rest"></div><div class="info"><b>工作表(Sheet)</b><a>详细...</a></div>`;}
});
def('ra-status',class extends Base{
  css(){return `:host{display:grid;grid-template-columns:1303px 349px 1fr;column-gap:2px;height:21px;background:#f0f0f0;font:12px ${MIX};color:#222;padding:2px 1px 0;box-sizing:border-box}
   div{border-top:1px solid #a0a0a0;border-left:1px solid #a0a0a0;box-sizing:border-box;line-height:20px;padding-left:1px;overflow:hidden;white-space:nowrap}`;}
  html(){return `<div></div><div>位置(cm) :</div><div>已授权 :</div>`;}
});
def('ra-dropdown',class extends Base{
  css(){return `:host{position:absolute;left:173px;top:56px;width:156px;height:245px;box-sizing:border-box;border:1px solid #9b9b9b;background:linear-gradient(90deg,#f0f0f0 25px,#fbfbfb 25px);box-shadow:3px 3px 4px rgba(0,0,0,.45);padding-top:1px;font:12px ${CJK};color:#adadad;display:block}
   .i{display:flex;align-items:center;height:29px;white-space:nowrap}
   .ic{width:25px;display:flex;justify-content:center;flex:none}
   .t{margin-left:7px;flex:1}.k{margin-right:14px;font:12px "Liberation Sans",sans-serif;color:#c4c4c4}
   hr{margin:1.500px 3px 1.500px 33px;border:0;border-top:1px solid #b5b5b5;height:0}`;}
  html(){const it=(i,t,k='')=>`<div class="i"><span class="ic"><ra-icon name="${i}"></ra-icon></span><span class="t">${t}</span>${k?`<span class="k">${k}</span>`:''}</div>`;
   return it('merge','合并单元格(S)')+it('unmerge','取消合并单元格(T)')+'<hr>'+it('bolt','清除(U)','Del')+'<hr>'+it('insrow','插入行(V)')+it('xrow','删除行(W)')+it('addcol','增加列(X)')+it('inscol','插入列(Y)')+it('delcol','删除列(Z)');}
});
def('ra-watermark',class extends Base{
  css(){return `:host{position:absolute;left:4px;top:15px;width:200px;height:55px;display:block;pointer-events:none}
   svg{position:absolute;left:0;top:1px}
   .a{position:absolute;left:60px;top:-1px;font:900 27px "Noto Sans CJK SC",serif;color:rgba(42,137,222,.82);white-space:nowrap;line-height:30px}
   .b{position:absolute;left:61px;top:30px;font:bold 20px "Liberation Serif",serif;color:rgba(88,168,60,.9);white-space:nowrap;line-height:22px}`;}
  html(){return `<svg width="60" height="52" viewBox="0 0 60 52"><path d="M2 32C0 14 14 1 32 1c14 0 24 8 26 18-2 14-10 20-19 26 7-9 10-20 8-29C42 9 34 7 27 9 18 15 13 24 12 37 8 37 4 35 2 32z" fill="#3c93d8" fill-opacity=".85"/><path d="M26 9l7 14-6 16-12 4C16 28 19 17 26 9z" fill="#3c93d8" fill-opacity=".75"/><path d="M5 36c9 9 23 11 35 3 8-5 14-11 18-17-2 15-14 29-30 29C16 51 8 45 5 36z" fill="#ef9b44" fill-opacity=".85"/></svg>
   <div class="a">河东软件园</div><div class="b">www.pc0359.cn</div>`;}
});
def('ra-ime',class extends Base{
  css(){return `:host{position:absolute;right:0;bottom:0;width:199px;height:17px;display:flex;align-items:flex-end;background:#f6f8fb;color:#1e73be}
   .s{width:28px;height:18px;background:#ee5a24;font:italic bold 17px/18px "Liberation Sans",sans-serif;color:#fff;text-align:center;transform:skewX(-8deg);margin-left:1px;flex:none}
   .m{display:flex;flex:1;justify-content:space-between;align-items:center;padding:0 0 0 7px;height:17px}
   .m b{font:bold 13px/17px ${CJK}}.m svg{flex:none}`;}
  html(){const c='#1e73be';return `<div class="s">S</div><div class="m"><b>中</b>
   <svg width="14" height="14"><circle cx="4" cy="5" r="2" fill="none" stroke="${c}" stroke-width="1.400"/><path d="M11 9c1 1 0 3-1.500 4" fill="none" stroke="${c}" stroke-width="2"/></svg>
   <svg width="16" height="16"><circle cx="8" cy="8" r="6.500" fill="none" stroke="${c}" stroke-width="1.500"/><path d="M5 10c2 2 4 2 6 0" fill="none" stroke="${c}" stroke-width="1.200"/><path d="M5.500 6v1.500M10.500 6v1.500" stroke="${c}" stroke-width="1.400"/></svg>
   <svg width="14" height="16"><rect x="4" y="1" width="6" height="10" rx="3" fill="${c}"/><path d="M2 8c0 6 10 6 10 0M7 12v4" fill="none" stroke="${c}" stroke-width="1.400"/></svg>
   <svg width="17" height="14"><rect x=".5" y="1.500" width="16" height="12" rx="1" fill="${c}"/><path d="M2.500 4.500h12M2.500 7.500h12" stroke="#fff" stroke-dasharray="1.500 1"/><path d="M4.500 10.500h8" stroke="#fff" stroke-width="1.400"/></svg>
   <svg width="14" height="16"><circle cx="7" cy="4" r="3" fill="#a9b8c6"/><path d="M1 15c0-8 12-8 12 0z" fill="#a9b8c6"/></svg>
   <svg width="17" height="15"><path d="M1 4l5-3c1 2 4 2 5 0l5 3-2 3-2-1v9H5V6L3 7z" fill="${c}"/></svg>
   <svg width="13" height="16"><path d="M1 15l6-7c-1-3 1-6 5-6l-2 3 2 2 1-1v3c-1 1-3 2-5 1l-5 6z" fill="${c}"/></svg></div>`;}
});
</script>
</body></html>
